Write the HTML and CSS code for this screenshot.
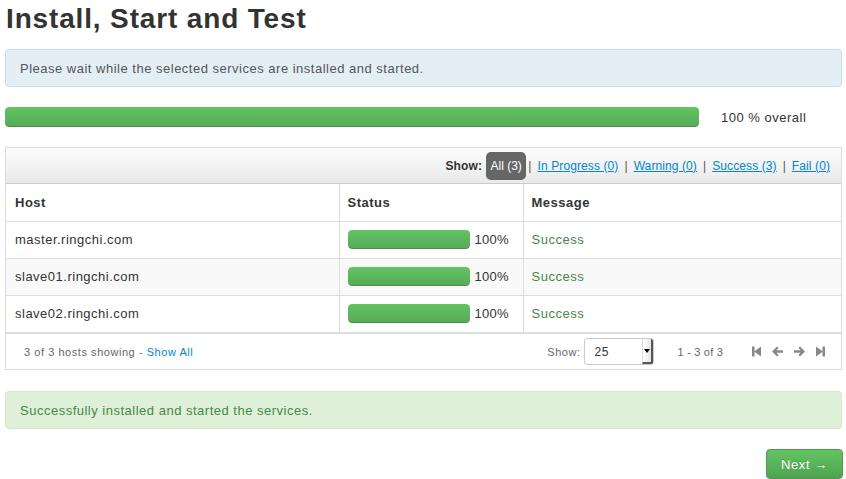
FILE: index.html
```html
<!DOCTYPE html>
<html>
<head>
<meta charset="utf-8">
<link rel="stylesheet" href="styles.css">
</head>
<body>
<div class="page">
  <h2 class="title">Install, Start and Test</h2>
  <div class="alert alert-info">Please wait while the selected services are installed and started.</div>
  <div class="overall">
    <div class="progress big"><div class="bar" style="width:100%"></div></div>
    <span class="overall-text">100 % overall</span>
  </div>
  <div class="box">
    <div class="box-header">
      <span class="show-label">Show:</span>
      <span class="filter-active">All (3)</span>
      <span class="sep first">|</span>
      <a class="filter">In Progress (0)</a>
      <span class="sep">|</span>
      <a class="filter">Warning (0)</a>
      <span class="sep">|</span>
      <a class="filter">Success (3)</a>
      <span class="sep">|</span>
      <a class="filter">Fail (0)</a>
    </div>
    <table class="hosts">
      <thead>
        <tr><th class="c-host">Host</th><th class="c-status">Status</th><th>Message</th></tr>
      </thead>
      <tbody>
        <tr><td>master.ringchi.com</td><td><div class="cell-status"><div class="progress small"><div class="bar" style="width:100%"></div></div><span>100%</span></div></td><td class="msg">Success</td></tr>
        <tr class="odd"><td>slave01.ringchi.com</td><td><div class="cell-status"><div class="progress small"><div class="bar" style="width:100%"></div></div><span>100%</span></div></td><td class="msg">Success</td></tr>
        <tr><td>slave02.ringchi.com</td><td><div class="cell-status"><div class="progress small"><div class="bar" style="width:100%"></div></div><span>100%</span></div></td><td class="msg">Success</td></tr>
      </tbody>
    </table>
    <div class="box-footer">
      <div class="showing">3 of 3 hosts showing - <a class="show-all">Show All</a></div>
      <div class="pager">
        <span class="show-lbl">Show:</span>
        <div class="select"><span>25</span><span class="caret-box"><svg width="6" height="4" viewBox="0 0 6 4"><path d="M0 0h6L3 4z" fill="#000"/></svg></span></div>
        <span class="range">1 - 3 of 3</span>
        <span class="icons">
          <svg width="9" height="11" viewBox="0 0 9 11"><rect x="0" y="0.5" width="2.5" height="10" fill="#888"/><path d="M2 5.5L9 0.5v10z" fill="#888"/></svg>
          <svg width="11" height="11" viewBox="0 0 11 11"><path d="M0 5.5L5 0.5 6.6 2.1 4.4 4.3H11v2.4H4.4l2.2 2.2L5 10.5z" fill="#888"/></svg>
          <svg width="11" height="11" viewBox="0 0 11 11"><path d="M11 5.5L6 0.5 4.4 2.1 6.6 4.3H0v2.4h6.6L4.4 8.9 6 10.5z" fill="#888"/></svg>
          <svg width="9" height="11" viewBox="0 0 9 11"><rect x="6.5" y="0.5" width="2.5" height="10" fill="#888"/><path d="M7 5.5L0 0.5v10z" fill="#888"/></svg>
        </span>
      </div>
    </div>
  </div>
  <div class="alert alert-success">Successfully installed and started the services.</div>
  <div class="actions"><button class="btn-success">Next &rarr;</button></div>
</div>
</body>
</html>
```
FILE: styles.css
```css
* { box-sizing: border-box; }
html, body { margin: 0; padding: 0; background: #fff; }
body { font-family: "Liberation Sans", Arial, sans-serif; font-size: 13px; color: #333; letter-spacing: 0.5px; }
.page { padding: 0 5px 0 5px; width: 847px; }
.title { margin: 0; padding: 0 0 0 1px; font-size: 28px; font-weight: bold; line-height: 37px; color: #333; height: 49px; letter-spacing: 0.85px; }
.alert { border-radius: 4px; padding: 0 14px; height: 38px; display: flex; align-items: center; font-size: 13px; }
.alert-info { background: #e4eff5; border: 1px solid #c9dde6; color: #555; }
.alert-success { background: #dff0d8; border: 1px solid #d6e9c6; color: #468847; margin-top: 21px; }
.overall { display: flex; align-items: center; margin-top: 20px; height: 20px; }
.progress { background: #f7f7f7; border-radius: 4px; overflow: hidden; }
.progress .bar { height: 100%; background: linear-gradient(#62c462, #57a957); box-shadow: inset 0 -1px 0 rgba(0,0,0,0.15); border-radius: 4px; }
.progress.big { width: 694px; height: 20px; }
.overall-text { margin-left: 22px; font-size: 13px; color: #333; }
.box { margin-top: 20px; border: 1px solid #ddd; }
.box-header { height: 36px; background: linear-gradient(#fdfdfd, #e9e9e9); border-bottom: 1px solid #ccc; display: flex; align-items: center; justify-content: flex-end; padding-right: 11px; font-size: 12px; letter-spacing: 0.1px; }
.show-label { font-weight: bold; color: #333; margin-right: 4px; }
.filter-active { background: #666; color: #fff; border-radius: 5px; padding: 0 4.5px; height: 28px; display: inline-flex; align-items: center; letter-spacing: 0; }
.sep { color: #555; margin: 0 6px 0 6px; }
.sep.first { margin-left: 2px; }
.filter { color: #0088cc; text-decoration: underline; }
.hosts { width: 100%; border-collapse: collapse; }
.hosts th, .hosts td { border-top: 1px solid #ddd; border-left: 1px solid #ddd; height: 37px; padding: 0 8px; text-align: left; vertical-align: middle; }
.hosts th:first-child, .hosts td:first-child { border-left: none; padding-left: 9px; }
.hosts thead th { border-top: none; font-weight: bold; color: #333; }
.c-host { width: 333px; }
.c-status { width: 184px; }
.hosts tr.odd td { background: #f9f9f9; }
.cell-status { display: flex; align-items: center; }
.progress.small { width: 122px; height: 19px; }
.cell-status span { margin-left: 5px; letter-spacing: 0.3px; }
.msg { color: #468847; }
.box-footer { border-top: 2px solid #ddd; height: 37px; display: flex; align-items: center; justify-content: space-between; padding: 0 16px 0 18px; font-size: 11px; color: #666; letter-spacing: 0.55px; }
.show-all { color: #0088cc; }
.pager { display: flex; align-items: center; }
.show-lbl { margin-right: 3px; }
.select { width: 70px; height: 27px; border: 1px solid #ccc; border-radius: 3px; display: flex; align-items: center; justify-content: space-between; padding-left: 10px; font-size: 12px; color: #333; background: #fff; }
.caret-box { width: 11px; height: 25px; display: flex; align-items: center; justify-content: center; background: linear-gradient(90deg, #fff, #e6e6e6); border-left: 1px solid #ddd; border-right: 2px solid #555; border-bottom: 2px solid #555; border-radius: 0 2px 2px 0; }
.range { margin-left: 24px; margin-right: 29px; letter-spacing: 0.2px; }
.icons { display: flex; align-items: center; gap: 11px; }
.icons svg { display: block; }
.actions { display: flex; justify-content: flex-end; margin-top: 20px; }
.btn-success { font-family: "Liberation Sans", Arial, sans-serif; width: 77px; height: 30px; margin-right: -1px; background: linear-gradient(#62c462, #51a351); border: 1px solid #4e9a4e; border-radius: 4px; color: #fff; font-size: 13px; padding: 0; text-shadow: 0 -1px 0 rgba(0,0,0,0.2); letter-spacing: 0.6px; }
```
